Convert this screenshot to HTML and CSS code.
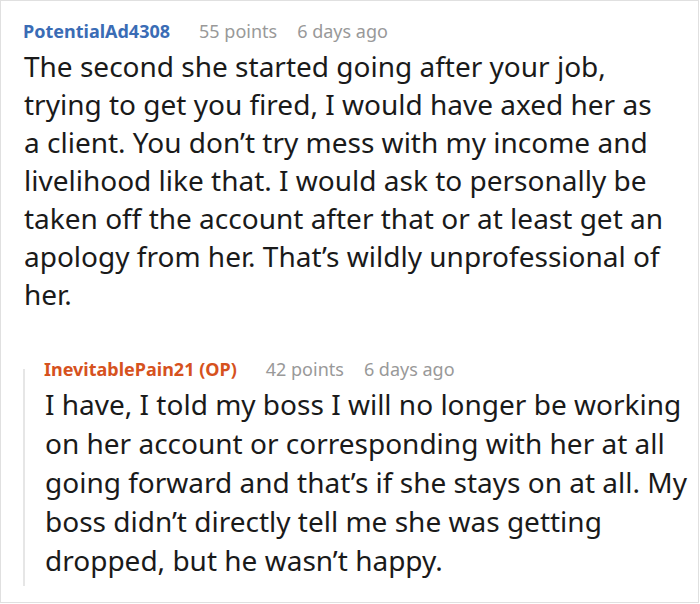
FILE: index.html
```html
<!DOCTYPE html>
<html>
<head>
<meta charset="utf-8">
<link rel="stylesheet" href="styles.css">
</head>
<body>
<div class="thread">
  <div class="comment">
    <div class="meta">
      <span class="user user-blue">PotentialAd4308</span>
      <span class="info">55 points</span>
      <span class="info">6 days ago</span>
    </div>
    <p class="text">The second she started going after your job, trying to get you fired, I would have axed her as a client. You don’t try mess with my income and livelihood like that. I would ask to personally be taken off the account after that or at least get an apology from her. That’s wildly unprofessional of her.</p>
  </div>
  <div class="reply">
    <div class="meta">
      <span class="user user-orange">InevitablePain21 (OP)</span>
      <span class="info">42 points</span>
      <span class="info">6 days ago</span>
    </div>
    <p class="text">I have, I told my boss I will no longer be working on her account or corresponding with her at all going forward and that’s if she stays on at all. My boss didn’t directly tell me she was getting dropped, but he wasn’t happy.</p>
  </div>
</div>
</body>
</html>
```
FILE: styles.css
```css
html, body {
  margin: 0;
  padding: 0;
  background: #fff;
}
.thread {
  box-sizing: border-box;
  width: 699px;
  height: 603px;
  border: 1px solid #e0e0e0;
  font-family: "Noto Sans", "Open Sans", sans-serif;
  overflow: hidden;
  padding: 17px 0 0 22px;
}
.meta {
  display: flex;
  gap: 20px;
  font-size: 18px;
  line-height: 26px;
}
.user {
  font-weight: bold;
  margin-right: 9px;
}
.user-blue { color: #3a6cb5; }
.user-orange { color: #d6521e; }
.info { color: #999; }
.text {
  margin: 3px 0 0 1px;
  font-size: 28px;
  line-height: 38px;
  color: #1a1a1a;
  width: 642px;
}
.reply {
  position: relative;
  margin-top: 43px;
  padding-left: 21px;
}
.reply::before {
  content: "";
  position: absolute;
  left: 0;
  top: 13px;
  bottom: -6px;
  width: 2px;
  background: #e6e6e6;
}
.reply .text {
  width: 645px;
  line-height: 39px;
  margin-bottom: 0;
}
```
